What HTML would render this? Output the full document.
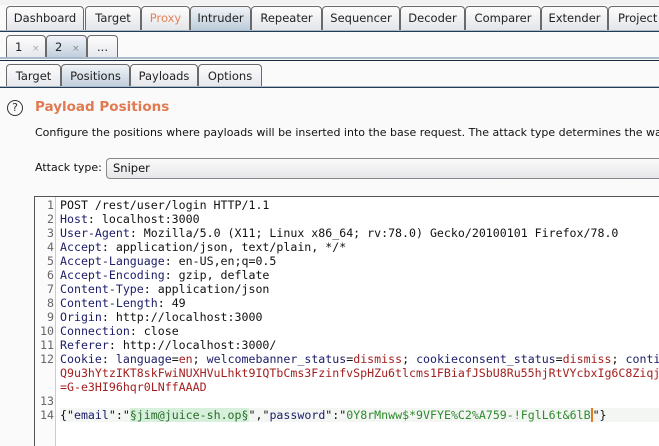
<!DOCTYPE html>
<html><head><style>
*{margin:0;padding:0;box-sizing:border-box}
body{width:659px;height:446px;background:#fafafa;font-family:"DejaVu Sans","Liberation Sans",sans-serif;font-size:11.5px;color:#111;position:relative;overflow:hidden}
.tab{position:absolute;height:24px;border:1px solid #6a6a6a;border-bottom:none;border-radius:4px 4px 0 0;background:linear-gradient(#fdfdfd,#e4e6ea);line-height:23px;text-align:center;font-size:11.5px;color:#222;overflow:hidden;white-space:nowrap}
.sel{background:linear-gradient(#f0f4f8,#bccbda)}
.bar{position:absolute;left:0;width:659px}
.ed{position:absolute;left:34px;top:196px;width:625px;height:250px;border:1px solid #555;border-right:none;border-bottom:none;background:#fff;overflow:hidden}
.g{position:absolute;left:0;top:0;width:21px;height:100%;border-right:1px solid #ccc;background:#fbfbfb}
pre{position:absolute;left:0;top:1px;font-family:"DejaVu Sans Mono","Liberation Mono",monospace;font-size:11.6px;line-height:14px;color:#111;white-space:pre}
.n{display:inline-block;width:19px;text-align:right;color:#666;margin-right:6px}
.k{color:#1c1c6a}.v{color:#a31f1f}.h{background:#d6f0dc;color:#2b6b2b}
</style></head><body>
<div class="bar" style="top:0;height:5px;background:#f2f2f2"></div>
<div class="tab" style="left:6px;top:6px;width:78px">Dashboard</div>
<div class="tab" style="left:85px;top:6px;width:56px">Target</div>
<div class="tab" style="left:141px;top:6px;width:49px;color:#e4835c">Proxy</div>
<div class="tab sel" style="left:190px;top:6px;width:61px">Intruder</div>
<div class="tab" style="left:251px;top:6px;width:71px">Repeater</div>
<div class="tab" style="left:322px;top:6px;width:78px">Sequencer</div>
<div class="tab" style="left:400px;top:6px;width:65px">Decoder</div>
<div class="tab" style="left:465px;top:6px;width:76px">Comparer</div>
<div class="tab" style="left:541px;top:6px;width:67px">Extender</div>
<div class="tab" style="left:608px;top:6px;width:51px;border-right:none;border-radius:4px 0 0 0;text-align:left;padding-left:9px">Project</div>
<div class="bar" style="top:30px;height:2px;background:#a8bacb;border-bottom:1px solid #243a50"></div>
<div class="tab" style="left:6px;top:35px;width:40px;text-align:left;padding-left:8px">1 <span style="color:#aaa;font-size:9px;margin-left:6px">×</span></div>
<div class="tab sel" style="left:46px;top:35px;width:41px;text-align:left;padding-left:8px">2 <span style="color:#888;font-size:9px;margin-left:6px">×</span></div>
<div class="tab" style="left:87px;top:35px;width:31px">...</div>
<div class="bar" style="top:57px;height:2px;background:#a8bacb"></div>
<div class="bar" style="top:60px;height:1px;background:#1a2a3a"></div>
<div class="tab" style="left:6px;top:64px;width:55px">Target</div>
<div class="tab sel" style="left:61px;top:64px;width:69px">Positions</div>
<div class="tab" style="left:130px;top:64px;width:68px">Payloads</div>
<div class="tab" style="left:198px;top:64px;width:64px">Options</div>
<div class="bar" style="top:86px;height:2px;background:#a8bacb;border-bottom:1px solid #243a50"></div>
<div style="position:absolute;left:7px;top:100px;width:16px;height:16px;border:1.3px solid #333;border-radius:50%;text-align:center;font-size:11px;line-height:14px;color:#333">?</div>
<div style="position:absolute;left:35px;top:99px;font-size:13.5px;font-weight:bold;color:#e07a52">Payload Positions</div>
<div style="position:absolute;left:35px;top:126px;width:624px;overflow:hidden;font-size:11px;white-space:nowrap">Configure the positions where payloads will be inserted into the base request. The attack type determines the way in which</div>
<div style="position:absolute;left:35px;top:161px;font-size:11px">Attack type:</div>
<div style="position:absolute;left:106px;top:158px;width:553px;height:21px;border:1px solid #888;border-right:none;border-radius:4px 0 0 4px;background:linear-gradient(#fafafa,#e6e7ea);padding-left:6px;line-height:19px;font-size:11.5px">Sniper</div>
<div class="ed"><div class="g"></div>
<pre><span class="n">1</span>POST /rest/user/login HTTP/1.1
<span class="n">2</span><span class="k">Host</span>: localhost:3000
<span class="n">3</span><span class="k">User-Agent</span>: Mozilla/5.0 (X11; Linux x86_64; rv:78.0) Gecko/20100101 Firefox/78.0
<span class="n">4</span><span class="k">Accept</span>: application/json, text/plain, */*
<span class="n">5</span><span class="k">Accept-Language</span>: en-US,en;q=0.5
<span class="n">6</span><span class="k">Accept-Encoding</span>: gzip, deflate
<span class="n">7</span><span class="k">Content-Type</span>: application/json
<span class="n">8</span><span class="k">Content-Length</span>: 49
<span class="n">9</span><span class="k">Origin</span>: http://localhost:3000
<span class="n">10</span><span class="k">Connection</span>: close
<span class="n">11</span><span class="k">Referer</span>: http://localhost:3000/
<span class="n">12</span><span class="k">Cookie</span>: <span class="k">language</span>=<span class="v">en</span>; <span class="k">welcomebanner_status</span>=<span class="v">dismiss</span>; <span class="k">cookieconsent_status</span>=<span class="v">dismiss</span>; <span class="k">continueCode</span>
<span class="n"></span><span class="v">Q9u3hYtzIKT8skFwiNUXHVuLhkt9IQTbCms3FzinfvSpHZu6tlcms1FBiafJSbU8Ru55hjRtVYcbxIg6C8Ziqj</span>
<span class="n"></span><span class="v">=G-e3HI96hqr0LNffAAAD</span>
<span class="n">13</span>
<span class="n">14</span><span style="background:#f3f6f3">{"<span class="k">email</span>":"<span class="h">§jim@juice-sh.op§</span>","<span class="k">password</span>":"<span style="color:#2e8b2e">0Y8rMnww$*9VFYE%C2%A759-!FglL6t&amp;6lB</span><span style="border-left:2px solid #e07a20">"</span>}                                        </span></pre>
</div>
</body></html>
